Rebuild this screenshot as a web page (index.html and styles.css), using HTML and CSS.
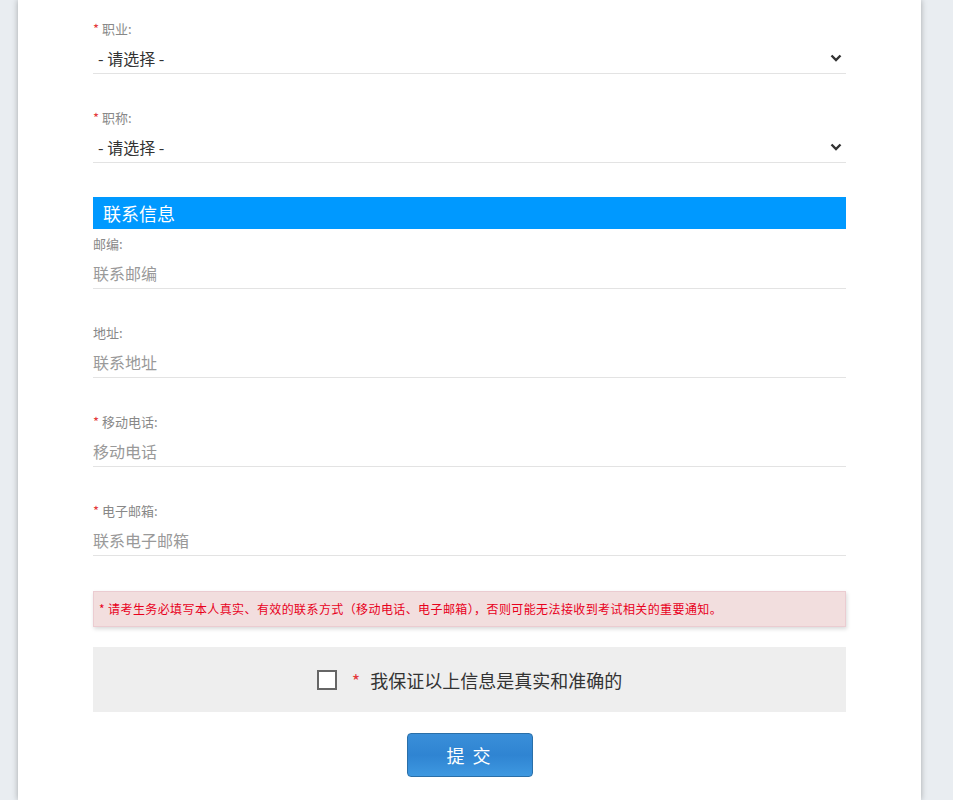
FILE: index.html
```html
<!DOCTYPE html>
<html lang="zh-CN">
<head>
  <meta charset="UTF-8">
  <title>考生信息</title>
  <link rel="stylesheet" href="styles.css">
</head>
<body>

<div class="card">
  <form class="form">

    <div class="group">
      <label class="label"><span class="req">*</span> 职业:</label>
      <div class="select-wrap">
        <select class="select">
          <option>- 请选择 -</option>
        </select>
        <svg class="chevron" width="12" height="8" viewBox="0 0 12 8"><path d="M1.5 1.5 L6 6 L10.5 1.5" fill="none" stroke="#333" stroke-width="2.4"/></svg>
      </div>
    </div>

    <div class="group">
      <label class="label"><span class="req">*</span> 职称:</label>
      <div class="select-wrap">
        <select class="select">
          <option>- 请选择 -</option>
        </select>
        <svg class="chevron" width="12" height="8" viewBox="0 0 12 8"><path d="M1.5 1.5 L6 6 L10.5 1.5" fill="none" stroke="#333" stroke-width="2.4"/></svg>
      </div>
    </div>

    <h3 class="section">联系信息</h3>

    <div class="group">
      <label class="label">邮编:</label>
      <input class="input" type="text" placeholder="联系邮编">
    </div>

    <div class="group">
      <label class="label">地址:</label>
      <input class="input" type="text" placeholder="联系地址">
    </div>

    <div class="group">
      <label class="label"><span class="req">*</span> 移动电话:</label>
      <input class="input" type="text" placeholder="移动电话">
    </div>

    <div class="group">
      <label class="label"><span class="req">*</span> 电子邮箱:</label>
      <input class="input" type="text" placeholder="联系电子邮箱">
    </div>

    <div class="notice">* 请考生务必填写本人真实、有效的联系方式（移动电话、电子邮箱），否则可能无法接收到考试相关的重要通知。</div>

    <div class="confirm">
      <span class="box"></span>
      <span class="req big">*</span>
      <span class="confirm-text">我保证以上信息是真实和准确的</span>
    </div>

    <div class="actions">
      <button type="button" class="submit">提 交</button>
    </div>

  </form>
</div>

</body>
</html>
```

FILE: styles.css
```css
html, body {
  margin: 0;
  padding: 0;
}
body {
  background: #e9edf1;
  font-family: "Noto Sans CJK SC", "Noto Sans", sans-serif;
  color: #333;
}
.card {
  width: 903px;
  margin-left: 18px;
  min-height: 800px;
  background: #fff;
  box-shadow: 0 0 6px rgba(0, 0, 0, 0.3);
}
.form {
  margin: 0 75px;
  padding-top: 19px;
}
.group {
  margin-bottom: 34px;
}
.label {
  display: block;
  height: 20px;
  line-height: 20px;
  font-size: 13px;
  color: #888;
}
.req {
  color: #e4393c;
}
.select-wrap {
  position: relative;
}
.select {
  appearance: none;
  -webkit-appearance: none;
  display: block;
  width: 100%;
  height: 35px;
  padding: 4px 0 0 5px;
  border: none;
  border-bottom: 1px solid #e3e3e3;
  background: #fff;
  font-family: inherit;
  font-size: 16px;
  color: #333;
  outline: none;
}
.chevron {
  position: absolute;
  right: 4px;
  top: 15px;
}
.input {
  display: block;
  width: 100%;
  box-sizing: border-box;
  height: 35px;
  padding: 4px 0 0;
  border: none;
  border-bottom: 1px solid #e3e3e3;
  font-family: inherit;
  font-size: 16px;
  color: #333;
  outline: none;
}
.input::placeholder {
  color: #999;
}
.section {
  margin: 0 0 5px;
  height: 32px;
  line-height: 32px;
  padding-left: 10px;
  background: #0099ff;
  color: #fff;
  font-size: 18px;
  font-weight: normal;
}
.notice {
  margin-top: 35px;
  height: 34px;
  line-height: 34px;
  padding-left: 5px;
  background: #f2dede;
  border: 1px solid #ebccd1;
  box-shadow: 1px 2px 4px rgba(0, 0, 0, 0.15);
  color: #e8001c;
  font-size: 12px;
  letter-spacing: 0.4px;
}
.confirm {
  margin-top: 20px;
  height: 65px;
  background: #eee;
  display: flex;
  align-items: center;
  justify-content: center;
}
.box {
  width: 16px;
  height: 16px;
  border: 2px solid #666;
  background: #fff;
  margin-right: 15px;
}
.big {
  font-size: 18px;
  margin-right: 10px;
}
.confirm-text {
  font-size: 18px;
  color: #333;
}
.actions {
  display: flex;
  justify-content: center;
  margin-top: 21px;
}
.submit {
  width: 126px;
  height: 44px;
  border: 1px solid #2a6fa8;
  border-radius: 4px;
  background: linear-gradient(#3a8fd9, #2f84d2 50%, #3e98e0);
  color: #fff;
  font-family: inherit;
  font-size: 18px;
  letter-spacing: 2px;
}
```
